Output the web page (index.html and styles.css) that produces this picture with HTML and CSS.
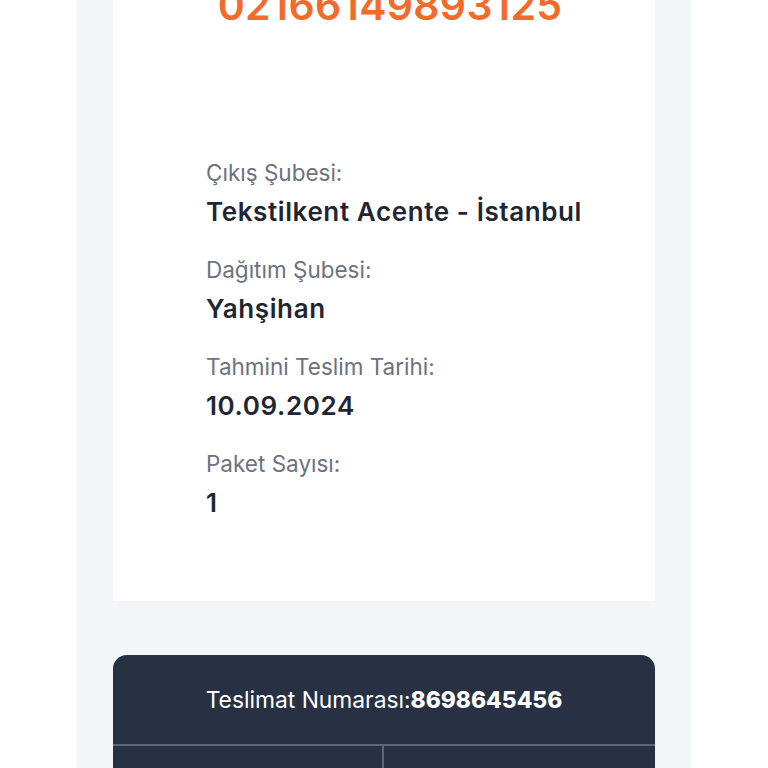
FILE: index.html
```html
<!DOCTYPE html>
<html lang="tr">

<head>
    <meta charset="UTF-8">
    <meta name="viewport" content="width=device-width, initial-scale=1.0">
    <title>Kargo Takip</title>
    <link rel="stylesheet" href="styles.css">
</head>

<body>
    <main class="panel">
        <section class="info-card">
            <div class="tracking-no">02166149893125</div>
            <dl class="details">
                <dt>Çıkış Şubesi:</dt>
                <dd>Tekstilkent Acente - İstanbul</dd>
                <dt>Dağıtım Şubesi:</dt>
                <dd>Yahşihan</dd>
                <dt>Tahmini Teslim Tarihi:</dt>
                <dd>10.09.2024</dd>
                <dt>Paket Sayısı:</dt>
                <dd>1</dd>
            </dl>
        </section>
        <section class="delivery-card">
            <div class="delivery-head">
                Teslimat Numarası:<strong>8698645456</strong>
            </div>
            <div class="delivery-grid">
                <div class="cell"></div>
                <div class="cell"></div>
            </div>
        </section>
    </main>
</body>

</html>
```

FILE: styles.css
```css
* {
    box-sizing: border-box;
}

body {
    margin: 0;
    background-color: #ffffff;
    font-family: Inter, "Noto Sans", sans-serif;
    overflow: hidden;
}

.panel {
    width: 614px;
    margin: -150px auto 0;
    padding: 0 36px 40px;
    background-color: #f3f6f9;
}

.info-card {
    background-color: #ffffff;
    padding: 130px 40px 84px 93px;
}

.tracking-no {
    color: #f26b2a;
    font-size: 41px;
    font-weight: 600;
    line-height: 50px;
    text-align: center;
    margin-left: -41px;
    letter-spacing: 0.3px;
}

.details {
    margin: 129px 0 0;
}

.details dt {
    color: #6b7280;
    font-size: 22.5px;
    line-height: 28px;
}

.details dd {
    margin: 11px 0 30px;
    color: #1f2633;
    font-size: 26px;
    font-weight: 600;
    line-height: 28px;
    letter-spacing: 0.6px;
}

.details dd:last-child {
    margin-bottom: 0;
}

.delivery-card {
    margin-top: 54px;
    background-color: #283143;
    border-radius: 14px;
    color: #ffffff;
    overflow: hidden;
}

.delivery-head {
    height: 91px;
    display: flex;
    align-items: center;
    justify-content: center;
    font-size: 22.8px;
    border-bottom: 2px solid #5e6677;
}

.delivery-head strong {
    font-weight: 800;
}

.delivery-grid {
    display: grid;
    grid-template-columns: 1fr 1fr;
}

.cell {
    height: 120px;
}

.cell:first-child {
    border-right: 2px solid #5e6677;
}
```
